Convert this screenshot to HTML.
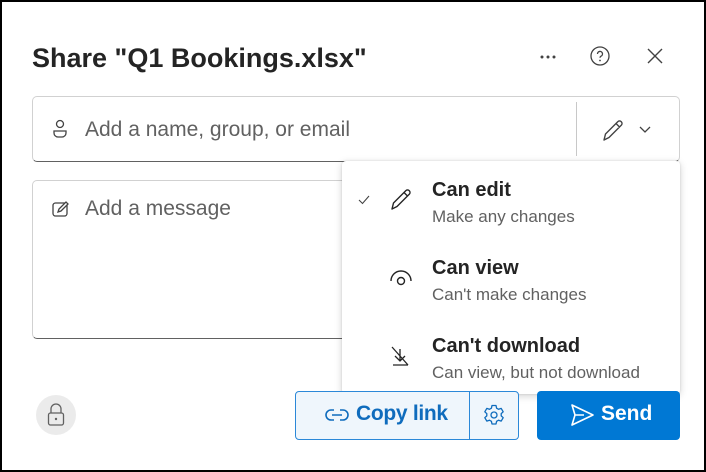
<!DOCTYPE html>
<html><head><style>
*{box-sizing:border-box;margin:0;padding:0}
body{width:706px;height:472px;background:#000;font-family:"Liberation Sans",sans-serif;position:relative;overflow:hidden}
.dlg{position:absolute;left:2px;top:2px;width:702px;height:468px;background:#fff}
.abs{position:absolute}
.t{position:absolute;white-space:nowrap}
</style></head><body>
<div class="dlg"></div>
<div class="t" style="left:32px;top:43px;font-size:27px;font-weight:bold;color:#242424;letter-spacing:0px">Share "Q1 Bookings.xlsx"</div>
<svg class="abs" style="left:539px;top:54px" width="18" height="6" viewBox="0 0 18 6"><circle cx="3" cy="3" r="1.5" fill="#424242"/><circle cx="9" cy="3" r="1.5" fill="#424242"/><circle cx="15" cy="3" r="1.5" fill="#424242"/></svg>
<svg class="abs" style="left:589px;top:45px" width="22" height="22" viewBox="0 0 22 22"><circle cx="11" cy="11" r="9" fill="none" stroke="#424242" stroke-width="1.3"/><path d="M8.5 9a2.5 2.5 0 1 1 3.5 2.2c-.7.4-1 .8-1 1.6" fill="none" stroke="#424242" stroke-width="1.3"/><circle cx="11" cy="15.5" r=".9" fill="#424242"/></svg>
<svg class="abs" style="left:646px;top:47px" width="18" height="18" viewBox="0 0 18 18"><path d="M2 2L16 16M16 2L2 16" stroke="#424242" stroke-width="1.4"/></svg>
<div class="abs" style="left:32px;top:96px;width:648px;height:66px;border:1px solid #d1d1d1;border-bottom:1.5px solid #616161;border-radius:5px"></div>
<svg class="abs" style="left:51px;top:119px" width="18" height="20" viewBox="0 0 18 20"><circle cx="9" cy="5" r="3.5" fill="none" stroke="#424242" stroke-width="1.3"/><path d="M3 12h12v2a4 4 0 0 1-4 4H7a4 4 0 0 1-4-4z" fill="none" stroke="#424242" stroke-width="1.3"/></svg>
<div class="t" style="left:85px;top:118px;font-size:21px;color:#616161">Add a name, group, or email</div>
<div class="abs" style="left:576px;top:102px;width:1px;height:54px;background:#c8c8c8"></div>
<svg class="abs" style="left:600px;top:117px" width="26" height="26" viewBox="0 0 26 26"><path d="M4 23l1.5-6L18 4.5a2.5 2.5 0 0 1 3.5 3.5L9 20.5z M16 6.5l3.5 3.5" fill="none" stroke="#424242" stroke-width="1.4" stroke-linejoin="round"/></svg>
<svg class="abs" style="left:638px;top:124px" width="14" height="10" viewBox="0 0 14 10"><path d="M2 3l5 5 5-5" fill="none" stroke="#424242" stroke-width="1.3"/></svg>
<div class="abs" style="left:32px;top:180px;width:400px;height:159px;border:1px solid #d1d1d1;border-bottom:1.5px solid #616161;border-radius:5px"></div>
<svg class="abs" style="left:51px;top:200px" width="20" height="18" viewBox="0 0 20 18"><rect x="2" y="3" width="14" height="13" rx="2.5" fill="none" stroke="#424242" stroke-width="1.3"/><path d="M7 12l1-3 7-7 2 2-7 7z" fill="#fff" stroke="#424242" stroke-width="1.3"/></svg>
<div class="t" style="left:85px;top:197px;font-size:21px;color:#616161">Add a message</div>
<div class="abs" style="left:342px;top:161px;width:338px;height:233px;background:#fff;border-radius:4px;box-shadow:0 2px 8px rgba(0,0,0,.18),0 0 2px rgba(0,0,0,.12)"></div>
<svg class="abs" style="left:357px;top:194px" width="14" height="12" viewBox="0 0 14 12"><path d="M2 6l3.5 3.5L12 2" fill="none" stroke="#424242" stroke-width="1.1"/></svg>
<svg class="abs" style="left:388px;top:186px" width="26" height="26" viewBox="0 0 26 26"><path d="M4 23l1.5-6L18 4.5a2.5 2.5 0 0 1 3.5 3.5L9 20.5z M16 6.5l3.5 3.5" fill="none" stroke="#242424" stroke-width="1.4" stroke-linejoin="round"/></svg>
<div class="t" style="left:432px;top:179px;font-size:20px;font-weight:bold;color:#242424">Can edit</div>
<div class="t" style="left:432px;top:207px;font-size:17px;color:#616161">Make any changes</div>
<svg class="abs" style="left:388px;top:266px" width="26" height="22" viewBox="0 0 26 22"><path d="M3 15a10 10 0 0 1 20 0" fill="none" stroke="#242424" stroke-width="1.4"/><circle cx="13" cy="15" r="3.5" fill="none" stroke="#242424" stroke-width="1.4"/></svg>
<div class="t" style="left:432px;top:257px;font-size:20px;font-weight:bold;color:#242424">Can view</div>
<div class="t" style="left:432px;top:285px;font-size:17px;color:#616161">Can't make changes</div>
<svg class="abs" style="left:389px;top:344px" width="24" height="24" viewBox="0 0 24 24"><path d="M3 3l16 18M11 5v12M6 12l5 5 5-5M4 21h15" fill="none" stroke="#242424" stroke-width="1.3"/></svg>
<div class="t" style="left:432px;top:335px;font-size:20px;font-weight:bold;color:#242424">Can't download</div>
<div class="t" style="left:432px;top:363px;font-size:17px;color:#616161">Can view, but not download</div>
<div class="abs" style="left:36px;top:395px;width:40px;height:40px;border-radius:50%;background:#ebebeb"></div>
<svg class="abs" style="left:45px;top:402px" width="22" height="26" viewBox="0 0 22 26"><path d="M6 11V7a5 5 0 0 1 10 0v4" fill="none" stroke="#616161" stroke-width="1.3"/><rect x="3.5" y="11" width="15" height="12" rx="2" fill="none" stroke="#616161" stroke-width="1.3"/><circle cx="11" cy="17" r="1.2" fill="#616161"/></svg>
<div class="abs" style="left:295px;top:391px;width:224px;height:49px;background:#eff6fc;border:1px solid #2b88d8;border-radius:4px"></div>
<div class="abs" style="left:469px;top:391px;width:1px;height:49px;background:#2b88d8"></div>
<svg class="abs" style="left:324px;top:405px" width="26" height="20" viewBox="0 0 26 20"><path d="M10 5H7a5 5 0 0 0 0 10h3M16 5h3a5 5 0 0 1 0 10h-3M8 10h10" fill="none" stroke="#0f6cbd" stroke-width="1.6"/></svg>
<div class="t" style="left:356px;top:402px;font-size:21px;font-weight:bold;color:#0f6cbd;letter-spacing:-0.3px">Copy link</div>
<svg class="abs" style="left:482px;top:403px" width="24" height="24" viewBox="0 0 24 24"><path d="M10 2.5h4l.6 2.7 2 1.1 2.6-.9 2 3.4-2 1.8v2.3l2 1.8-2 3.4-2.6-.9-2 1.1-.6 2.7h-4l-.6-2.7-2-1.1-2.6.9-2-3.4 2-1.8v-2.3l-2-1.8 2-3.4 2.6.9 2-1.1z" fill="none" stroke="#0f6cbd" stroke-width="1.3" stroke-linejoin="round"/><circle cx="12" cy="12" r="3" fill="none" stroke="#0f6cbd" stroke-width="1.3"/></svg>
<div class="abs" style="left:537px;top:391px;width:143px;height:49px;background:#0078d4;border-radius:4px"></div>
<svg class="abs" style="left:568px;top:402px" width="28" height="26" viewBox="0 0 28 26"><path d="M4 3l21 10L4 23l3-10z M7 13h9" fill="none" stroke="#fff" stroke-width="1.6" stroke-linejoin="round"/></svg>
<div class="t" style="left:601px;top:402px;font-size:21px;font-weight:bold;color:#fff">Send</div>
</body></html>
